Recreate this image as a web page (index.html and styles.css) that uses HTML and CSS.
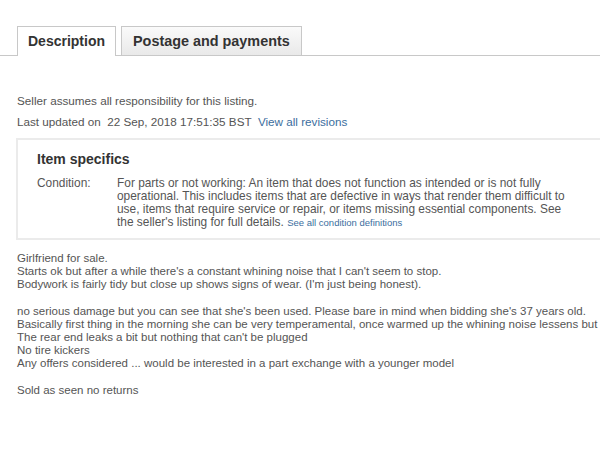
FILE: index.html
```html
<!DOCTYPE html>
<html lang="en">
<head>
    <meta charset="UTF-8">
    <meta name="viewport" content="width=device-width, initial-scale=1.0">
    <title>Item description</title>
    <link rel="stylesheet" href="styles.css">
</head>
<body>
    <div class="page">
        <div class="tabs">
            <a class="tab active" href="javascript:;">Description</a>
            <a class="tab" href="javascript:;">Postage and payments</a>
        </div>

        <div class="seller">
            <p>Seller assumes all responsibility for this listing.</p>
            <p class="updated">Last updated on &nbsp;22 Sep, 2018 17:51:35 BST &nbsp;<a href="javascript:;">View all revisions</a></p>
        </div>

        <div class="specs">
            <h2>Item specifics</h2>
            <div class="row">
                <span class="label">Condition:</span>
                <span class="value">For parts or not working: An item that does not function as intended or is not fully operational. This includes items that are defective in ways that render them difficult to use, items that require service or repair, or items missing essential components. See the seller's listing for full details. <a class="small" href="javascript:;">See all condition definitions</a></span>
            </div>
        </div>

        <div class="desc">
            <p>Girlfriend for sale.<br>
            Starts ok but after a while there's a constant whining noise that I can't seem to stop.<br>
            Bodywork is fairly tidy but close up shows signs of wear. (I'm just being honest).</p>
            <p>no serious damage but you can see that she's been used. Please bare in mind when bidding she's 37 years old.<br>
            Basically first thing in the morning she can be very temperamental, once warmed up the whining noise lessens but doesn't stop.<br>
            The rear end leaks a bit but nothing that can't be plugged<br>
            No tire kickers<br>
            Any offers considered ... would be interested in a part exchange with a younger model</p>
            <p>Sold as seen no returns</p>
        </div>
    </div>
</body>
</html>
```

FILE: styles.css
```css
*{
    margin: 0;
    padding: 0;
}
body{
    background: #fff;
    overflow: hidden;
    font-family: "Liberation Sans", Arial, sans-serif;
    color: #555;
}
a{
    color: #3b6e9e;
    text-decoration: none;
}
.page{
    width: 600px;
    padding-top: 26px;
}
.tabs{
    display: flex;
    gap: 5px;
    padding-left: 17px;
    border-bottom: 1px solid #c8c8c8;
}
.tab{
    display: block;
    height: 28px;
    line-height: 28px;
    padding: 0 10px;
    border: 1px solid #c8c8c8;
    border-bottom: none;
    font-size: 14px;
    font-weight: bold;
    color: #333;
    background: linear-gradient(#fafafa, #e9e9e9);
}
.tab + .tab{
    padding: 0 11px;
    font-size: 14.4px;
}
.tab.active{
    background: #fff;
    margin-bottom: -1px;
    height: 29px;
}
.seller{
    padding: 38px 0 0 17px;
    font-size: 11.7px;
    line-height: 13px;
}
.seller .updated{
    margin-top: 8px;
}
.specs{
    margin: 10px -40px 0 16px;
    border: 2px solid #ebebeb;
    padding: 11px 0 9px 19px;
}
.specs h2{
    font-size: 14px;
    color: #333;
    line-height: 17px;
}
.row{
    display: flex;
    margin-top: 9px;
    font-size: 11.9px;
    line-height: 13px;
}
.label{
    width: 80px;
    flex: none;
}
.value{
    width: 453px;
}
.small{
    font-size: 9.5px;
    line-height: 1;
}
.desc{
    padding: 12px 0 0 17px;
    font-size: 11.5px;
    line-height: 13.2px;
    white-space: nowrap;
    overflow: hidden;
}
.desc p{
    margin-bottom: 13px;
}
```
